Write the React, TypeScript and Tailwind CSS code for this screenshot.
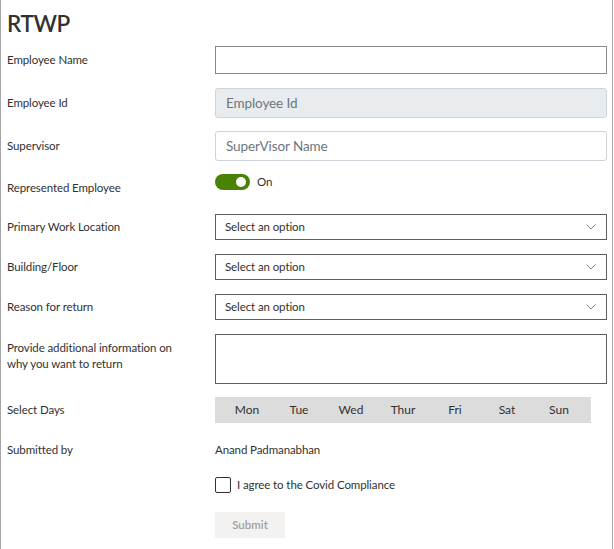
import React from "react";

const font = { fontFamily: '"Segoe UI", Lato, "Open Sans", sans-serif' };

function Chevron() {
  return (
    <svg width="10" height="6" viewBox="0 0 10 6" className="shrink-0">
      <path d="M0.5 0.5 L5 5 L9.5 0.5" fill="none" stroke="#8a8886" strokeWidth="1" />
    </svg>
  );
}

function Select() {
  return (
    <div className="flex h-[26px] flex-1 items-center justify-between border border-[#605e5c] bg-white pl-[9px] pr-[10px] text-[11.5px] tracking-[-0.1px] text-[#323130]">
      <span>Select an option</span>
      <Chevron />
    </div>
  );
}

function Label({ children, className = "" }: { children: React.ReactNode; className?: string }) {
  return (
    <div className={"w-[208px] shrink-0 pr-[22px] text-[11.5px] leading-[16px] tracking-[-0.1px] text-[#323130] " + className}>
      {children}
    </div>
  );
}

export default function App() {
  const days = ["Mon", "Tue", "Wed", "Thur", "Fri", "Sat", "Sun"];
  return (
    <div style={font} className="h-[549px] w-[613px] border-x border-[#a6a6a6] bg-white pl-[6px] pr-[5px]">
      <div className="flex h-[46px] items-start pt-[8px]">
        <h1 className="text-[22.5px] font-semibold leading-[32px] tracking-[-0.4px] text-[#323130]">RTWP</h1>
      </div>

      <div className="mb-[14px] flex h-[28px] items-center">
        <Label>Employee Name</Label>
        <div className="h-[28px] flex-1 border border-[#8a8886] bg-white" />
      </div>

      <div className="mb-[13px] flex h-[30px] items-center">
        <Label>Employee Id</Label>
        <div className="flex h-[30px] flex-1 items-center rounded-[3px] border border-[#ced4da] bg-[#e9ecef] pl-[10px] text-[13.5px] tracking-[-0.1px] text-[#6c757d]">
          Employee Id
        </div>
      </div>

      <div className="mb-[13px] flex h-[30px] items-center">
        <Label>Supervisor</Label>
        <div className="flex h-[30px] flex-1 items-center rounded-[3px] border border-[#ced4da] bg-white pl-[10px] text-[13.5px] tracking-[-0.1px] text-[#6c757d]">
          SuperVisor Name
        </div>
      </div>

      <div className="flex h-[40px] items-start">
        <Label className="mt-[6px]">Represented Employee</Label>
        <div className="flex items-center">
          <div className="flex h-[16px] w-[35px] items-center justify-end rounded-full bg-[#498205] pr-[4px]">
            <div className="h-[10px] w-[10px] rounded-full bg-white" />
          </div>
          <span className="ml-[7px] text-[11.5px] leading-[16px] text-[#323130]">On</span>
        </div>
      </div>

      <div className="mb-[14px] flex h-[26px] items-center">
        <Label>Primary Work Location</Label>
        <Select />
      </div>
      <div className="mb-[14px] flex h-[26px] items-center">
        <Label>Building/Floor</Label>
        <Select />
      </div>
      <div className="mb-[14px] flex h-[26px] items-center">
        <Label>Reason for return</Label>
        <Select />
      </div>

      <div className="mb-[13px] flex h-[50px] items-start">
        <Label className="mt-[6px]">Provide additional information on why you want to return</Label>
        <div className="h-[50px] flex-1 border border-[#605e5c] bg-white" />
      </div>

      <div className="flex h-[26px] items-center">
        <Label>Select Days</Label>
        <div className="flex h-[26px] w-[376px] items-center bg-[#dcdcdc] px-[6px]">
          {days.map((d) => (
            <div key={d} className="w-[52px] text-center text-[12px] text-[#323130]">
              {d}
            </div>
          ))}
        </div>
      </div>

      <div className="flex h-[54px] items-center">
        <Label>Submitted by</Label>
        <span className="text-[11.5px] tracking-[-0.1px] text-[#323130]">Anand Padmanabhan</span>
      </div>

      <div className="flex">
        <div className="w-[208px] shrink-0" />
        <div className="flex flex-col">
          <label className="flex items-center">
            <span className="h-[16px] w-[16px] rounded-[2px] border border-[#323130] bg-white" />
            <span className="ml-[6px] text-[11.5px] leading-[16px] tracking-[-0.1px] text-[#323130]">I agree to the Covid Compliance</span>
          </label>
          <button className="mt-[19px] h-[26px] w-[70px] bg-[#f3f2f1] text-[11.5px] font-semibold text-[#a19f9d]">
            Submit
          </button>
        </div>
      </div>
    </div>
  );
}
